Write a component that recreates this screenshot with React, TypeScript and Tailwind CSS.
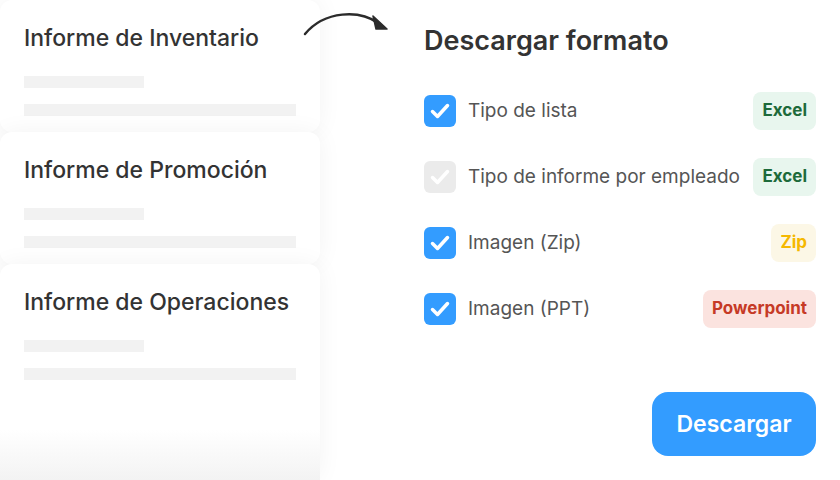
import React from "react";

const reports = ["Informe de Inventario", "Informe de Promoción", "Informe de Operaciones"];

const formats = [
  { label: "Tipo de lista", checked: true, badge: "Excel", badgeClass: "bg-[#e8f6ee] text-[#1d6a3a]" },
  { label: "Tipo de informe por empleado", checked: false, badge: "Excel", badgeClass: "bg-[#e8f6ee] text-[#1d6a3a]" },
  { label: "Imagen (Zip)", checked: true, badge: "Zip", badgeClass: "bg-[#fcf7e6] text-[#f5b800]" },
  { label: "Imagen (PPT)", checked: true, badge: "Powerpoint", badgeClass: "bg-[#fbe3df] text-[#c63a26]" },
];

function CheckBox({ checked }: { checked: boolean }) {
  return (
    <div
      className={`w-8 h-8 rounded-md flex items-center justify-center shrink-0 ${
        checked ? "bg-[#339cff]" : "bg-[#ebebeb]"
      }`}
    >
      <svg width="24" height="24" viewBox="0 0 24 24" fill="none">
        <path
          d="M4.5 12.5 L9.5 17.5 L19.5 6.5"
          stroke="white"
          strokeWidth="3.5"
          strokeLinecap="round"
          strokeLinejoin="round"
        />
      </svg>
    </div>
  );
}

export default function App() {
  return (
    <div
      className="relative w-[840px] h-[480px] overflow-hidden bg-white flex"
      style={{ fontFamily: "Inter, 'Noto Sans', sans-serif" }}
    >
      {/* report cards */}
      <div className="w-[320px] flex flex-col shrink-0">
        {reports.map((title, i) => (
          <div
            key={title}
            className={`relative rounded-xl bg-white px-6 pt-[24px] shadow-[0_0_24px_rgba(0,0,0,0.05)] ${
              i === reports.length - 1 ? "flex-1" : "h-[132px]"
            }`}
          >
            <h3 className="text-[23px] leading-[28px] font-medium text-[#333333]">{title}</h3>
            <div className="mt-[24px] h-3 w-[120px] bg-[#f2f2f2]" />
            <div className="mt-4 h-3 w-[272px] bg-[#f2f2f2]" />
            {i === reports.length - 1 && (
              <div className="absolute left-0 right-0 bottom-0 h-[50px] bg-gradient-to-b from-white to-[#f3f3f3]" />
            )}
          </div>
        ))}
      </div>

      {/* arrow */}
      <svg className="absolute left-[300px] top-[8px]" width="92" height="34" viewBox="0 0 92 34" fill="none">
        <path d="M5 26 C 25 2, 60 2, 78 15" stroke="#2b2b2b" strokeWidth="2.5" strokeLinecap="round" />
        <path d="M73 8 L87 21 L76 21 Z" fill="#2b2b2b" stroke="#2b2b2b" strokeWidth="1.5" strokeLinejoin="round" />
      </svg>

      {/* download panel */}
      <div className="flex-1 pl-[104px] pr-6 pt-[25px] pb-6 flex flex-col">
        <h2 className="text-[27px] leading-[32px] font-semibold text-[#333333]">Descargar formato</h2>
        <div className="mt-[35px] flex flex-col gap-[28px]">
          {formats.map((f) => (
            <div key={f.label} className="flex items-center h-[38px]">
              <CheckBox checked={f.checked} />
              <span className="ml-3 text-[19px] text-[#555555]">{f.label}</span>
              <span
                className={`ml-auto h-[38px] px-[9px] rounded-lg flex items-center text-[17px] font-bold ${f.badgeClass}`}
              >
                {f.badge}
              </span>
            </div>
          ))}
        </div>
        <div className="mt-auto flex justify-end">
          <button className="w-[164px] h-16 rounded-2xl bg-[#339cff] text-white text-[23px] font-semibold">
            Descargar
          </button>
        </div>
      </div>
    </div>
  );
}
